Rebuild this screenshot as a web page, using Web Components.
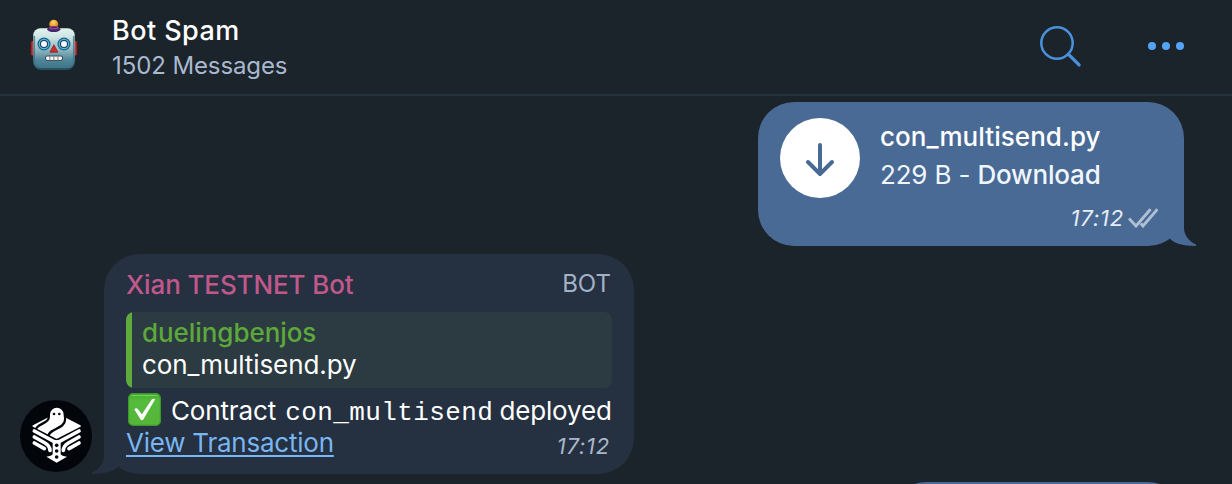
<!DOCTYPE html>
<html lang="en">
<head>
<meta charset="utf-8">
<title>Bot Spam</title>
<style>
html,body{margin:0;background:#1b232b;overflow:hidden}
body{width:1232px;height:484px;font-family:Inter,"Liberation Sans",sans-serif;color:#fff}
</style>
</head>
<body>
<chat-window></chat-window>
<script>
const define=(name,html)=>{
  const t=document.createElement('template');
  t.innerHTML=html;
  customElements.define(name,class extends HTMLElement{
    constructor(){super();this.attachShadow({mode:'open'}).appendChild(t.content.cloneNode(true));}
  });
};

define('robot-avatar',`
<style>:host{display:block;width:52px;height:56px}svg{display:block}</style>
<svg width="52" height="56" viewBox="28 17 52 56">
  <defs>
    <linearGradient id="f" x1="0" y1="0" x2="0" y2="1"><stop offset="0" stop-color="#e2f3ee"/><stop offset=".2" stop-color="#cfe6e4"/><stop offset=".55" stop-color="#8fb5bf"/><stop offset=".8" stop-color="#4f8599"/><stop offset="1" stop-color="#3f7588"/></linearGradient>
    <linearGradient id="r" x1="0" y1="0" x2="1" y2="0"><stop offset="0" stop-color="#7e1519"/><stop offset=".5" stop-color="#d5403c"/><stop offset="1" stop-color="#6e1216"/></linearGradient>
    <radialGradient id="o" cx=".45" cy=".3" r=".7"><stop offset="0" stop-color="#ffdc6a"/><stop offset=".6" stop-color="#f39a2d"/><stop offset="1" stop-color="#b95d16"/></radialGradient>
  </defs>
  <rect x="30.5" y="41" width="5" height="14.5" rx="2" fill="url(#r)"/>
  <rect x="72.5" y="41" width="5" height="14.5" rx="2" fill="url(#r)"/>
  <rect x="33.3" y="29" width="41.4" height="41" rx="7.5" fill="#28505e"/>
  <rect x="33.3" y="28.3" width="41.4" height="39.7" rx="7" fill="url(#f)"/>
  <path d="M34.3 36v24q0 6 4 7.2M73.7 36v24q0 6-4 7.2" fill="none" stroke="#3e7284" stroke-width="1.5" opacity=".75"/>
  <circle cx="53.8" cy="24.2" r="4.5" fill="url(#o)"/>
  <ellipse cx="53.8" cy="29.2" rx="6.6" ry="2.9" fill="#48246a"/>
  <path d="M49 27.6q4.8 2.3 9.6 0" stroke="#8350a7" stroke-width="1.2" fill="none"/>
  <circle cx="44" cy="44" r="6.5" fill="#17638a"/><circle cx="64" cy="44" r="6.5" fill="#17638a"/>
  <circle cx="44" cy="44" r="4.7" fill="#203d59" stroke="#58b9df" stroke-width="1.2"/><circle cx="64" cy="44" r="4.7" fill="#203d59" stroke="#58b9df" stroke-width="1.2"/>
  <circle cx="44" cy="44" r="3" fill="#f5f7ff"/><circle cx="64" cy="44" r="3" fill="#f5f7ff"/>
  <path d="M53.9 44.8l4 7.4h-8z" fill="#c5302e" stroke="#8d2226" stroke-width=".8" stroke-linejoin="round"/>
  <rect x="45" y="55.6" width="18" height="5.4" rx="2.4" fill="#38535f"/>
  <rect x="46" y="56.5" width="16" height="3.4" rx="1.4" fill="#f4f3ef"/>
  <path d="M49.9 56v4.4M53.9 56v4.4M57.9 56v4.4" stroke="#7b7f82" stroke-width="1"/>
</svg>`);

define('search-icon',`
<style>:host{display:block;width:48px;height:48px}svg{display:block}</style>
<svg width="48" height="48" viewBox="1036 22 48 48" fill="none" stroke="#4a90dc" stroke-linecap="round"><circle cx="1057" cy="43" r="15.7" stroke-width="2.5"/><path d="M1068.3 54.2l10.800 10.700" stroke-width="3.300"/></svg>`);

define('more-icon',`
<style>:host{display:flex;gap:6px}i{width:8px;height:8px;border-radius:50%;background:#54a3f7}</style><i></i><i></i><i></i>`);

define('chat-header',`
<style>
:host{display:flex;box-sizing:border-box;height:96px;border-bottom:2px solid #263140;padding:0 48px 0 28px;align-items:flex-start}
robot-avatar{margin-top:17px}
.names{margin:15px auto 0 32px;white-space:nowrap}
.title{font-size:27px;line-height:32px;font-weight:500;letter-spacing:.45px}
.sub{font-size:24px;line-height:32px;margin-top:3px;color:#a9b8cf;letter-spacing:-.1px}
search-icon{margin-top:22px}
more-icon{margin:42px 0 0 64px}
</style>
<robot-avatar></robot-avatar>
<div class="names"><div class="title"><slot name="title"></slot></div><div class="sub"><slot name="sub"></slot></div></div>
<search-icon></search-icon><more-icon></more-icon>`);

define('file-message',`
<style>
:host{display:block;position:relative;box-sizing:border-box;width:426px;height:144px;margin:6px 48px 0 auto;padding:16px 22px 0;border-radius:36px;background:#496a95}
.row{display:flex;gap:20px}
.disc{width:80px;height:80px;border-radius:50%;background:#fff;flex:none}
.disc svg{display:block}
.text{white-space:nowrap;font-size:26px;line-height:38px}
.name{font-weight:500;letter-spacing:.05px}.b{font-weight:500}
.info{color:#f0f6fd;letter-spacing:-.17px}
.meta{display:flex;justify-content:flex-end;align-items:center;gap:4px;height:30px;margin-top:5px;padding-right:4px;color:#e6edf7;font-size:22px;font-style:italic;letter-spacing:.8px}
.tail{position:absolute;right:-12px;bottom:0}
</style>
<div class="row">
 <div class="disc"><svg width="80" height="80" viewBox="0 0 80 80" fill="none" stroke="#496a95" stroke-width="4" stroke-linecap="round" stroke-linejoin="round"><path d="M40 27v29M28 44l12 12 12-12"/></svg></div>
 <div class="text"><div class="name"><slot name="name"></slot></div><div class="info"><slot name="size"></slot> - <span class="b"><slot name="action"></slot></span></div></div>
</div>
<div class="meta"><span><slot name="time"></slot></span>
<svg width="30" height="20" viewBox="0 0 30 20" fill="none" stroke="#b0c0d4" stroke-width="2.9"><path d="M1 10.500l7 7.500L22.500 1.200M12.800 15.500l2.200 2.500L29.500 1.200"/></svg></div>
<svg class="tail" width="50" height="46" viewBox="0 0 50 46" fill="#496a95"><path d="M38 0V28C38 36 44 42 50 44.500V46C36 46 28 43 24 38.800L16 30V0z"/></svg>`);

define('brand-avatar',`
<style>:host{display:block;width:72px;height:72px;border-radius:50%;background:#02060b}svg{display:block}</style>
<svg width="72" height="72" viewBox="0 0 216 216" stroke-linejoin="round">
 <path d="M40 78L88 53h44l48 25-70 36z" fill="#fff" stroke="#fff" stroke-width="5"/>
 <path d="M86 44v10c0 12-24 17-34 27q-6 6-5 12M135 46v14c0 16-18 22-36 32q-12 6-15 18" fill="none" stroke="#02060b" stroke-width="7"/>
 <path d="M90 60V44a20.500 20.500 0 0 1 41 0v16z" fill="#fff"/>
 <circle cx="102" cy="42" r="4" fill="#02060b"/><circle cx="118" cy="42" r="4" fill="#02060b"/>
 <g fill="none" stroke="#fff" stroke-width="11" stroke-linecap="round">
  <path d="M43 93l56 30q11 6 22 0l56-30"/>
  <path d="M43 111l32 18q14 8 15 22M177 111l-32 18q-14 8-15 22M43 129l30 17M177 129l-30 17"/>
 </g>
 <path d="M98 121h24v42q3 5 19 7l-31 18-31-18q16-2 19-7z" fill="#fff"/>
 <g fill="#02060b"><circle cx="110" cy="136" r="5.500"/><circle cx="110" cy="153" r="5.500"/><circle cx="110" cy="171" r="5.500"/></g>
</svg>`);

define('reply-quote',`
<style>
:host{display:block;box-sizing:border-box;height:76px;border-radius:8px;overflow:hidden;background:linear-gradient(90deg,#5eaa3c 6px,#2c3b41 6px);padding:5px 16px;font-size:26px;line-height:32px;white-space:nowrap;letter-spacing:-.08px}
.who{color:#5da83b;font-weight:500;letter-spacing:-.06px}
</style><div class="who"><slot name="who"></slot></div><div><slot></slot></div>`);

define('check-emoji',`
<style>:host{display:block;width:33px;height:33px}svg{display:block}</style>
<svg width="33" height="33" viewBox="0 0 33 33"><defs><linearGradient id="g" x1="0" y1="0" x2="0" y2="1"><stop offset="0" stop-color="#45ad30"/><stop offset=".25" stop-color="#55bc3c"/><stop offset="1" stop-color="#56b43a"/></linearGradient></defs>
<rect x=".6" y=".6" width="31.800" height="31.800" rx="4.500" fill="url(#g)" stroke="#3c9a2b" stroke-width="1.200"/><path d="M3 3.200Q3 2.500 5 2.500H28Q30 2.500 30 3.200" fill="none" stroke="#78d15c" stroke-width="1"/>
<path d="M6.300 16.300q1.700-1.700 3.300-.6l4.300 5.500L23.500 6.800q1.400-1.500 3.700-.6L15.300 26.500q-1.400 1.600-2.700 0z" fill="#fff"/></svg>`);

define('bot-message',`
<style>
:host{display:flex;align-items:flex-end;margin:8px 0 0 20px;height:220px}
brand-avatar{margin:0 12px 2px 0}
.bubble{position:relative;box-sizing:border-box;width:530px;height:220px;border-radius:36px;background:#253040;padding:14px 22px 0;font-size:26px;line-height:32px;white-space:nowrap}
.head{display:flex;justify-content:space-between;height:44px}
.from{color:#c0588c;font-weight:500;padding-top:1px;letter-spacing:-.12px}
.role{color:#a3b1c7;font-size:24px;padding-right:1px}
.body{display:flex;align-items:flex-start;height:32px;margin-top:7px;padding-left:2px;letter-spacing:-.15px}
.body check-emoji{margin:-2px 10px 0 0}
.mono{font-family:"Liberation Mono",monospace;font-size:26px;letter-spacing:.4px;margin:0 -1px 0 2px}
.foot{display:flex;justify-content:space-between}
.link{color:#79b6f2;letter-spacing:-.23px;text-decoration:underline;text-decoration-thickness:2px;text-underline-offset:3px;text-decoration-skip-ink:none}
.time{color:#a9b6ca;font-size:22px;font-style:italic;padding:3px 2px 0 0;letter-spacing:.75px}
.tail{position:absolute;left:-12px;bottom:0}
</style>
<brand-avatar></brand-avatar>
<div class="bubble">
 <svg class="tail" width="50" height="46" viewBox="0 0 50 46" fill="#253040"><path d="M12 0V28C12 36 6 42 0 44.500V46C14 46 22 43 26 38.800L34 30V0z"/></svg>
 <div class="head"><span class="from"><slot name="from"></slot></span><span class="role"><slot name="role"></slot></span></div>
 <slot name="quote"></slot>
 <div class="body"><check-emoji></check-emoji><div><slot name="a"></slot> <span class="mono"><slot name="code"></slot></span> <slot name="b"></slot></div></div>
 <div class="foot"><span class="link"><slot name="link"></slot></span><span class="time"><slot name="time"></slot></span></div>
</div>`);

define('next-message',`
<style>:host{display:block;width:294px;height:72px;margin:8px 48px 0 auto;border-radius:36px;background:#496a95}</style>`);

define('chat-window',`
<style>:host{display:block;width:1232px;height:484px;overflow:hidden;background:#1b232b}</style>
<chat-header><span slot="title">Bot Spam</span><span slot="sub">1502 Messages</span></chat-header>
<file-message><span slot="name">con_multisend.py</span><span slot="size">229 B</span><span slot="action">Download</span><span slot="time">17:12</span></file-message>
<bot-message><span slot="from">Xian TESTNET Bot</span><span slot="role">BOT</span>
<reply-quote slot="quote"><span slot="who">duelingbenjos</span>con_multisend.py</reply-quote>
<span slot="a">Contract</span><span slot="code">con_multisend</span><span slot="b">deployed</span><span slot="link">View Transaction</span><span slot="time">17:12</span></bot-message>
<next-message></next-message>`);
</script>
</body>
</html>
